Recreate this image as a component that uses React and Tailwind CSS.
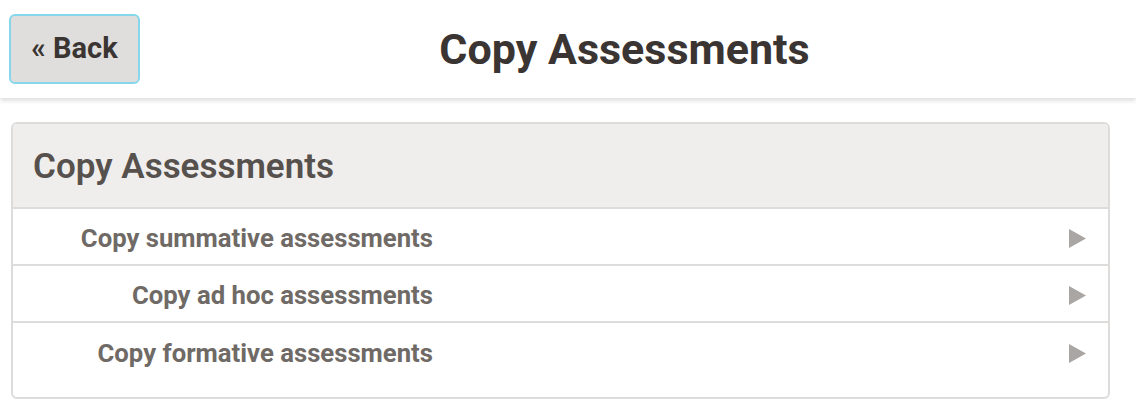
import React from "react";

const items = [
  "Copy summative assessments",
  "Copy ad hoc assessments",
  "Copy formative assessments",
];

function Arrow() {
  return (
    <svg width="17" height="19" viewBox="0 0 17 19" className="shrink-0">
      <path d="M0 0 L17 9.5 L0 19 Z" fill="#aaa6a4" />
    </svg>
  );
}

export default function App() {
  return (
    <div className="w-[1136px] h-[420px] bg-white font-['Roboto',sans-serif] overflow-hidden">
      <div className="h-[98px] flex items-center px-[9px] shadow-[0_3px_4px_rgba(0,0,0,0.12)] relative">
        <button className="w-[131px] h-[70px] rounded-md border-2 border-[#86d7ee] bg-[#e0dedd] text-[#3a3533] text-[29px] font-bold">
          « Back
        </button>
        <h1 className="flex-1 text-center text-[#3a3533] text-[43px] font-bold pr-[18px]">
          Copy Assessments
        </h1>
      </div>
      <div className="mx-[11px] mt-[24px] w-[1099px] rounded-md border-2 border-[#dedcdb] overflow-hidden">
        <div className="h-[85px] bg-[#efeeed] border-b-2 border-[#dedcdb] flex items-center px-[20px] pt-[3px]">
          <h2 className="text-[35px] font-semibold text-[#57514e]">Copy Assessments</h2>
        </div>
        <div className="pb-[17px]">
          {items.map((t, i) => (
            <div
              key={t}
              className={`h-[57px] flex items-center pr-[22px] pt-[3px] ${i < items.length - 1 ? "border-b-2 border-[#dedcdb]" : ""}`}
            >
              <div className="w-[420px] text-right text-[25.7px] font-bold text-[#6f6a66]">{t}</div>
              <div className="flex-1" />
              <Arrow />
            </div>
          ))}
        </div>
      </div>
    </div>
  );
}
